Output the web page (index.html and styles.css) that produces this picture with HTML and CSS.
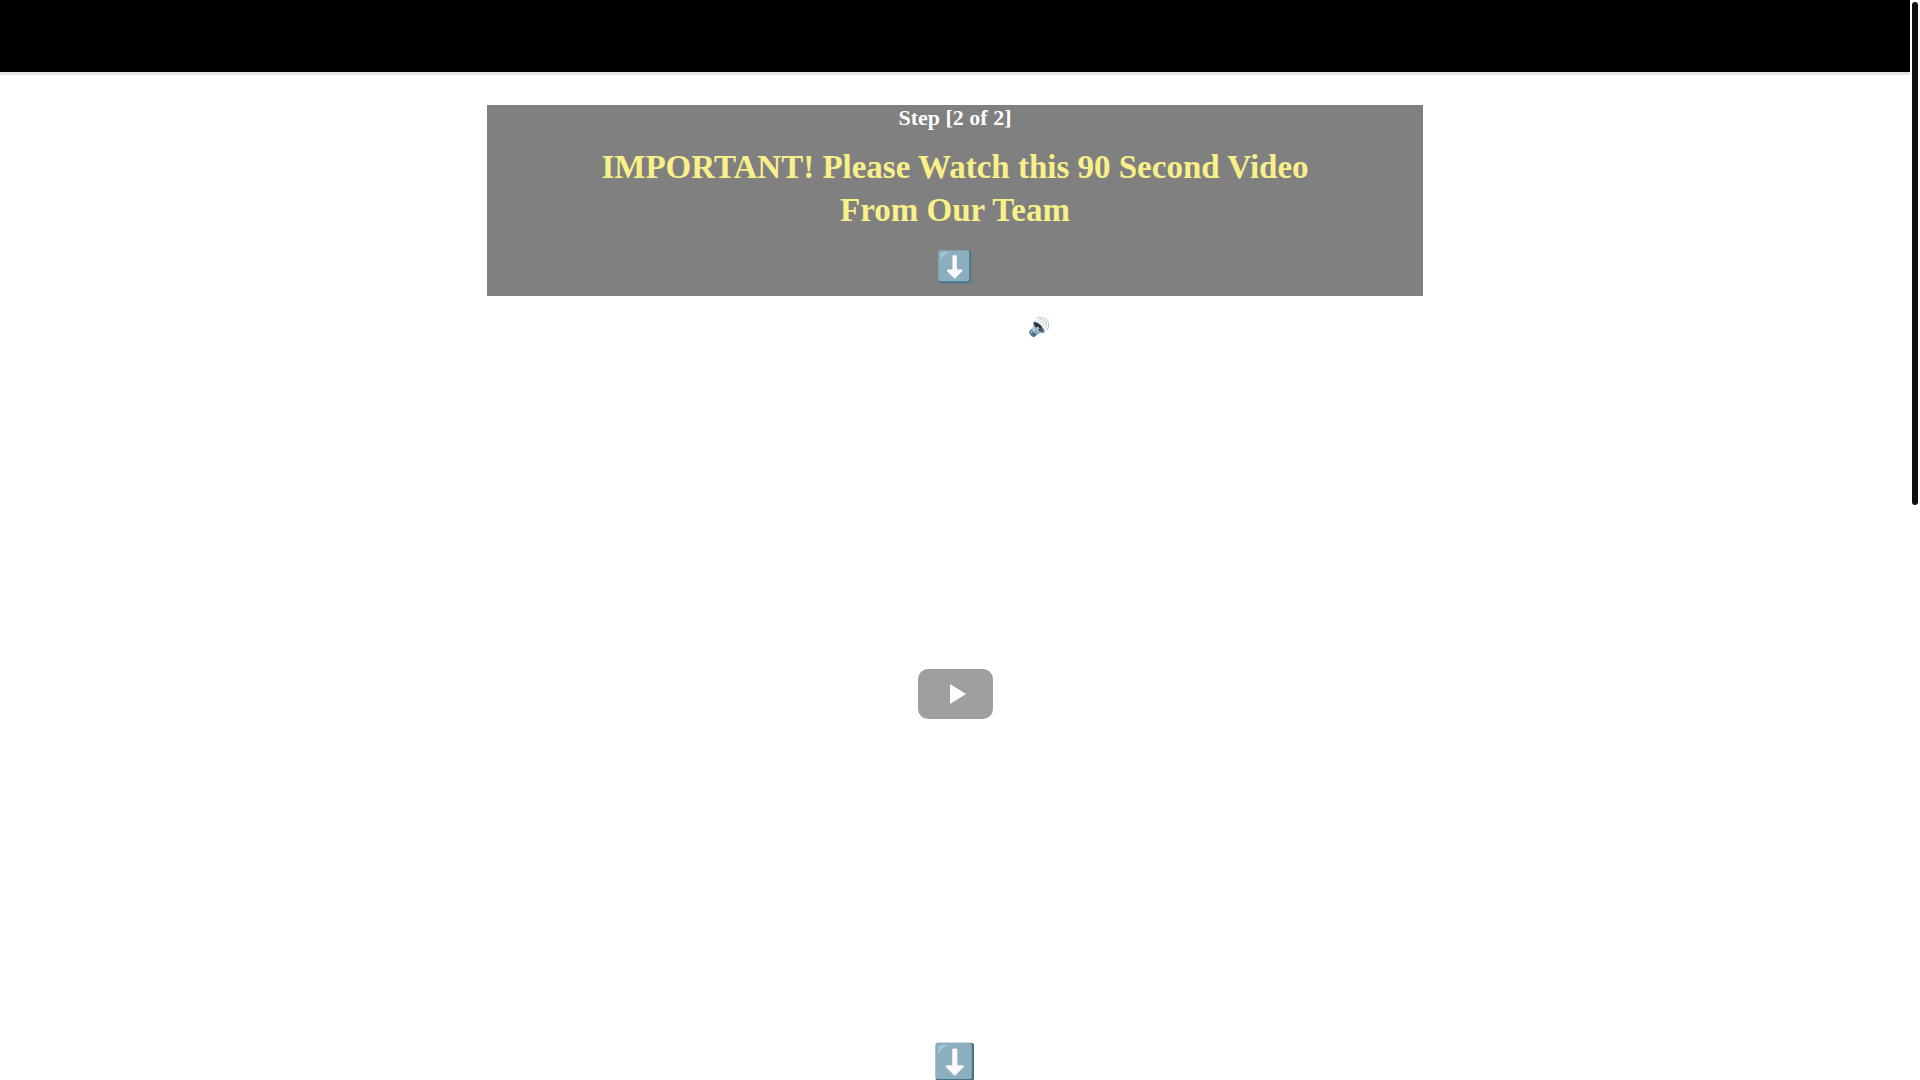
FILE: index.html
```html
<!DOCTYPE html>
<html lang="en">
<head>
  <meta charset="utf-8">
  <meta name="viewport" content="width=device-width, initial-scale=1">
  <title>Step 2 of 2</title>
  <link rel="stylesheet" href="styles.css">
</head>
<body>

  <header class="top-bar"></header>

  <main class="content">
    <section class="intro">
      <h3 class="step">Step [2 of 2]</h3>
      <h1 class="headline">IMPORTANT! Please Watch this 90 Second Video From Our Team</h1>
      <div class="arrow">⬇️</div>
    </section>

    <p class="sound">🔊</p>

    <div class="video">
      <button class="play" type="button" aria-label="Play video">
        <svg width="16" height="20" viewBox="0 0 16 20"><path d="M0 0L16 10L0 20Z" fill="#fff"/></svg>
      </button>
    </div>

    <div class="arrow arrow-large">⬇️</div>
  </main>

  <!-- page scroll indicator -->
  <div class="scroll-thumb"></div>

</body>
</html>
```

FILE: styles.css
```css
* {
  box-sizing: border-box;
}

body {
  font-family: "Liberation Serif", "Noto Color Emoji", serif;
  background: #fff;
  margin: 0;
  padding-right: 10px;
  height: 100vh;
  overflow: hidden;
}

.top-bar {
  height: 75px;
  background: #000;
  border-bottom: 3px solid #e5e5e5;
}

.content {
  width: 100%;
  max-width: 936px;
  margin: 30px auto 0;
  text-align: center;
}

.intro {
  background: #808080;
  padding-bottom: 7px;
}

.step {
  margin: 0;
  font-size: 22px;
  line-height: 26px;
  color: #fff;
}

.headline {
  margin: 0;
  padding: 15px 100px 12px;
  font-size: 33px;
  line-height: 43px;
  color: #faf089;
}

.arrow {
  font-size: 30px;
  line-height: 45px;
}

.sound {
  margin: 16px 0 0;
  padding-left: 170px;
  font-size: 18px;
  line-height: 30px;
}

.video {
  display: flex;
  align-items: center;
  justify-content: center;
  width: 100%;
  aspect-ratio: 16 / 9;
  margin: 89px 0 82px;
}

.play {
  display: flex;
  align-items: center;
  justify-content: center;
  width: 75px;
  height: 50px;
  padding: 0 0 0 5px;
  border: none;
  border-radius: 10px;
  background: #9f9f9f;
  cursor: pointer;
}

.arrow-large {
  font-size: 35px;
}

.scroll-thumb {
  position: fixed;
  top: 2px;
  right: 2px;
  width: 6px;
  height: 503px;
  border-radius: 3px;
  background: #111;
}
```
